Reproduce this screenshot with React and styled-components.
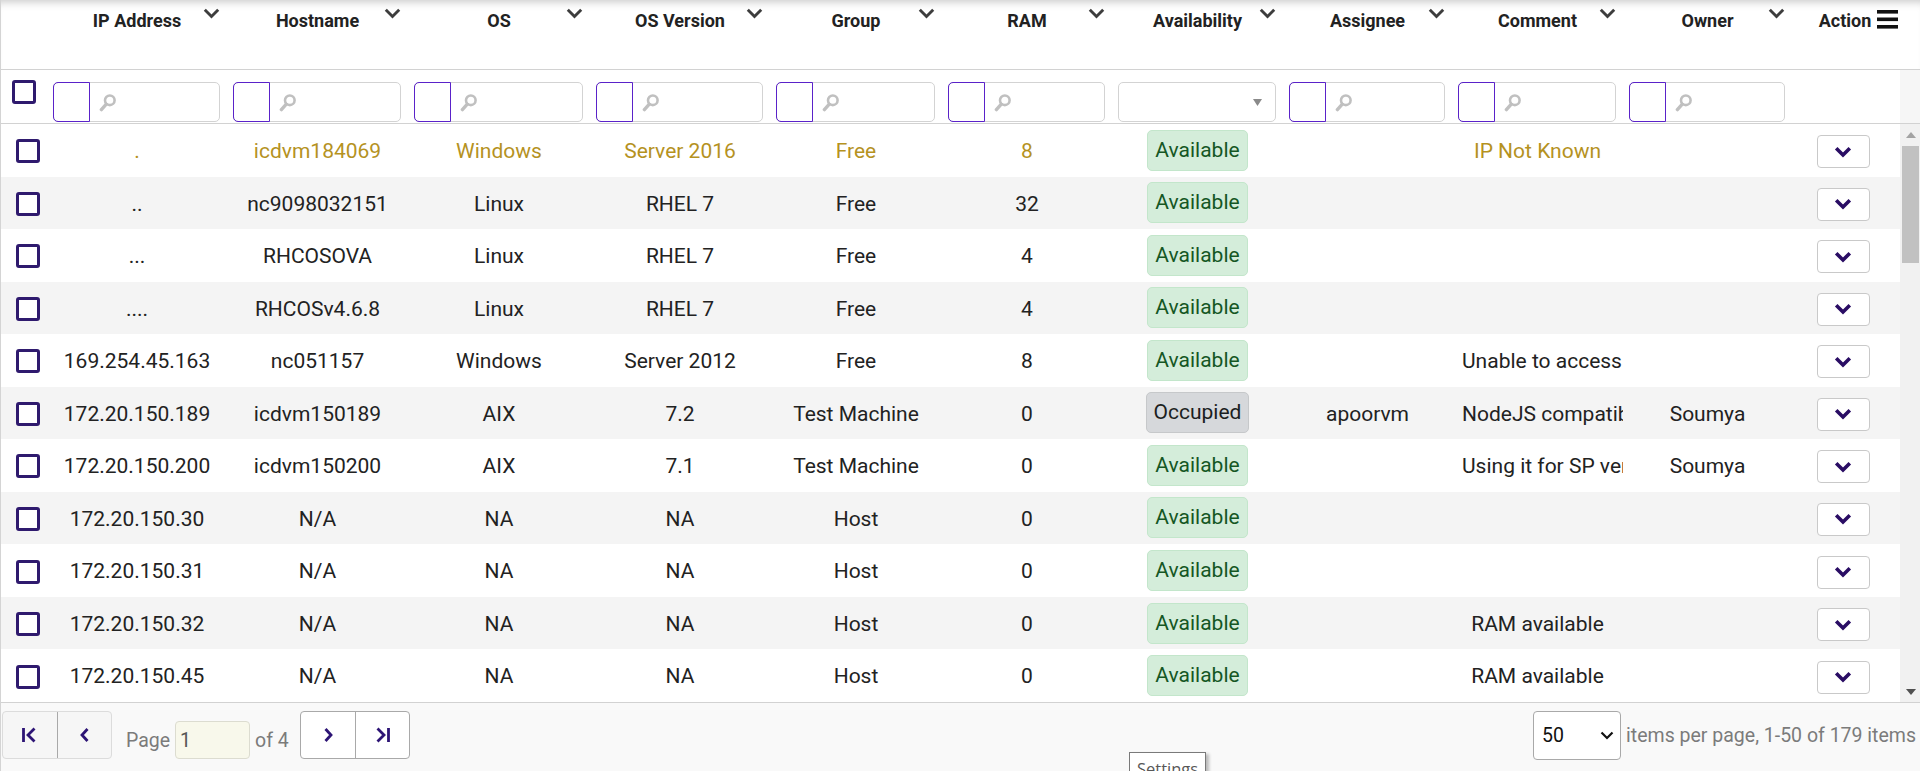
import React from 'react';
import styled, { createGlobalStyle } from 'styled-components';

const GlobalStyle = createGlobalStyle`
  * { box-sizing: border-box; }
  html, body { margin: 0; padding: 0; background: #fff; }
  body {
    font-family: Roboto, "Liberation Sans", Arial, sans-serif;
    overflow: hidden;
    color: #222;
  }
`;

const WIDTHS = [46, 180, 181, 182, 180, 172, 170, 171, 169, 171, 169, 108];
const COLS = WIDTHS.map((w) => `${w}px`).join(' ');
const ROW_H = 'calc(578px / 11)';

const Page = styled.div`
  width: 1920px;
  height: 771px;
  border-left: 1px solid #d4d4d4;
  display: flex;
  flex-direction: column;
  position: relative;
  overflow: hidden;
  background: #fff;
`;

const HeaderRow = styled.div`
  flex: none;
  display: grid;
  grid-template-columns: ${COLS} 1fr;
  height: 70px;
  border-bottom: 1px solid #d2d2d2;
  box-shadow: inset 0 9px 8px -7px rgba(0, 0, 0, 0.22);
`;

const HeaderCell = styled.div`
  display: grid;
  grid-template-columns: 1fr auto 1fr;
  align-items: start;
  padding: 9px ${(p) => p.$pr ?? 7}px 0 ${(p) => p.$pl ?? 7}px;
  font-size: 18px;
  font-weight: 700;
  line-height: 24px;
  color: #222;
`;

const HeaderLabel = styled.span`
  grid-column: 2;
  white-space: nowrap;
`;

const HeaderIcon = styled.span`
  grid-column: 3;
  justify-self: end;
  display: flex;
  margin-top: ${(p) => p.$mt ?? -1}px;
`;

const FilterRow = styled.div`
  flex: none;
  display: grid;
  grid-template-columns: ${COLS} 1fr;
  height: 54px;
  border-bottom: 1px solid #d2d2d2;
`;

const FilterCell = styled.div`
  display: flex;
  align-items: flex-end;
  padding: 12px 7px 1px 6px;
`;

const HeaderCheckCell = styled.div`
  display: flex;
  align-items: flex-start;
  padding: 10px 0 0 11px;
`;

const ScrollGutter = styled.div`
  background: #f6f6f6;
`;

const FilterBox = styled.div`
  flex: 1;
  height: 40px;
  display: flex;
  align-items: center;
  justify-content: ${(p) => (p.$select ? 'flex-end' : 'flex-start')};
  padding-right: ${(p) => (p.$select ? '13px' : '0')};
  border: 1px solid #d3d3d3;
  border-radius: 5px;
  background: #fff;
`;

const OperatorBox = styled.div`
  width: 37px;
  align-self: stretch;
  margin: -1px 0 -1px -1px;
  border: 1px solid #5a22c9;
  border-radius: 5px 0 0 5px;
`;

const SearchIcon = styled.svg`
  margin-left: 9px;
  margin-top: 2px;
`;

const Body = styled.div`
  flex: none;
  height: 578px;
  display: flex;
`;

const Rows = styled.div`
  flex: 1;
  overflow: hidden;
`;

const ScrollTrack = styled.div`
  flex: none;
  width: 20px;
  display: flex;
  flex-direction: column;
  background: #f1f1f1;
`;

const ScrollButton = styled.div`
  flex: none;
  height: 21px;
  display: flex;
  align-items: center;
  justify-content: center;
  padding-left: 2px;
`;

const ScrollThumb = styled.div`
  flex: none;
  height: 117px;
  margin: 1px 1px 0 2px;
  background: #c1c1c1;
`;

const ScrollSpace = styled.div`
  flex: 1;
`;

const Row = styled.div`
  display: grid;
  grid-template-columns: ${COLS};
  height: ${ROW_H};
  background: ${(p) => (p.$alt ? '#f4f4f4' : '#fff')};
  color: ${(p) => (p.$hl ? '#b5921f' : '#222')};
`;

const Cell = styled.div`
  padding: 1px 10px 0;
  text-align: center;
  white-space: nowrap;
  overflow: hidden;
  font-size: 21px;
  line-height: ${ROW_H};
`;

const CheckCell = styled.div`
  display: flex;
  align-items: center;
  padding: 2px 0 0 15px;
`;

const Checkbox = styled.div`
  width: 24px;
  height: 24px;
  border: 3px solid #2f1a6e;
  border-radius: 3px;
  background: #fff;
`;

const CenterCell = styled.div`
  display: flex;
  align-items: center;
  justify-content: center;
  padding-top: ${(p) => p.$pt ?? 0}px;
`;

const Badge = styled.span`
  padding: 6px 7px;
  font-size: 21px;
  line-height: 27px;
  border-radius: 5px;
  border: 1px solid ${(p) => (p.$busy ? '#c6c8ca' : '#c3e6cb')};
  background: ${(p) => (p.$busy ? '#d6d8db' : '#d4edda')};
  color: ${(p) => (p.$busy ? '#1b1e21' : '#155724')};
`;

const ActionButton = styled.div`
  width: 53px;
  height: 33px;
  margin-right: 6px;
  display: flex;
  align-items: center;
  justify-content: center;
  background: #fff;
  border: 1px solid #c9c9c9;
  border-radius: 4px;
`;

const Footer = styled.div`
  flex: 1;
  border-top: 1px solid #d2d2d2;
  background: #f9f9f9;
  display: flex;
  justify-content: space-between;
  align-items: flex-start;
  padding: 8px 4px 0 1px;
  font-size: 19.5px;
  color: #7b7b7b;
`;

const Pager = styled.div`
  display: flex;
  align-items: flex-end;
`;

const ButtonGroup = styled.div`
  display: flex;
  height: 48px;
  border: 1px solid ${(p) => (p.$strong ? '#a9a9a9' : '#dcdcdc')};
  border-radius: 4px;
  background: ${(p) => (p.$strong ? '#fff' : '#f6f6f6')};
  overflow: hidden;
`;

const PagerButton = styled.div`
  width: 54px;
  display: flex;
  align-items: center;
  justify-content: center;
  & + & {
    border-left: 1px solid ${(p) => (p.$strong ? '#a9a9a9' : '#dcdcdc')};
  }
`;

const PageInfo = styled.div`
  display: flex;
  align-items: center;
  gap: 5px;
  height: 38px;
  margin: 0 11px 0 14px;
`;

const PageInput = styled.div`
  width: 75px;
  height: 38px;
  display: flex;
  align-items: center;
  padding-left: 4px;
  background: #f8f8eb;
  border: 1px solid #dcdcd0;
  border-radius: 4px;
  color: #555;
`;

const SizeArea = styled.div`
  display: flex;
  align-items: center;
  gap: 5px;
  height: 49px;
`;

const SizeSelect = styled.div`
  width: 88px;
  height: 49px;
  margin-left: -2px;
  display: flex;
  align-items: center;
  justify-content: space-between;
  padding: 0 6px 0 8px;
  background: #fff;
  border: 1px solid #a9a9a9;
  border-radius: 4px;
  color: #111;
`;

const Tooltip = styled.div`
  position: absolute;
  left: 1128px;
  top: 752px;
  padding: 4px 7px;
  background: #fff;
  border: 1px solid #7a7a7a;
  box-shadow: 3px 2px 3px rgba(0, 0, 0, 0.25);
  font-family: "Open Sans", "DejaVu Sans", sans-serif;
  font-size: 16.5px;
  color: #575757;
  white-space: nowrap;
`;

const Chevron = () => (
  <svg width="17" height="11" viewBox="0 0 17 11">
    <polyline points="1.8,1.8 8.5,8.5 15.2,1.8" fill="none" stroke="#3d3d3d" strokeWidth="2.9" />
  </svg>
);

const Hamburger = () => (
  <svg width="21" height="20" viewBox="0 0 21 20">
    <rect x="0" y="0" width="21" height="3.6" fill="#111" />
    <rect x="0" y="7.5" width="21" height="3.6" fill="#111" />
    <rect x="0" y="15" width="21" height="3.6" fill="#111" />
  </svg>
);

const Magnifier = () => (
  <SearchIcon width="17" height="18" viewBox="0 0 17 18">
    <circle cx="10.8" cy="6.3" r="4.8" fill="none" stroke="#c0c0c0" strokeWidth="2.6" />
    <line x1="7.3" y1="10.2" x2="2.4" y2="15.6" stroke="#c0c0c0" strokeWidth="3.4" strokeLinecap="round" />
  </SearchIcon>
);

const DownTriangle = () => (
  <svg width="9" height="7" viewBox="0 0 9 7">
    <polygon points="0,0 9,0 4.5,7" fill="#8a8a8a" />
  </svg>
);

const ScrollUp = () => (
  <svg width="10" height="6" viewBox="0 0 10 6">
    <polygon points="0,6 10,6 5,0" fill="#a3a3a3" />
  </svg>
);

const ScrollDown = () => (
  <svg width="10" height="6" viewBox="0 0 10 6">
    <polygon points="0,0 10,0 5,6" fill="#505050" />
  </svg>
);

const ActionChevron = () => (
  <svg width="18" height="12" viewBox="0 0 18 12">
    <polyline points="2.2,2.2 9,9 15.8,2.2" fill="none" stroke="#2a0d64" strokeWidth="3.6" />
  </svg>
);

const PAGER_COLOR = '#2d1475';

const IconFirst = () => (
  <svg width="18" height="18" viewBox="0 0 18 18">
    <line x1="2.5" y1="2" x2="2.5" y2="16" stroke={PAGER_COLOR} strokeWidth="2.8" />
    <polyline points="13.5,2.5 7,9 13.5,15.5" fill="none" stroke={PAGER_COLOR} strokeWidth="2.8" />
  </svg>
);

const IconPrev = () => (
  <svg width="16" height="18" viewBox="0 0 16 18">
    <polyline points="10.5,3 5,9 10.5,15" fill="none" stroke={PAGER_COLOR} strokeWidth="2.8" />
  </svg>
);

const IconNext = () => (
  <svg width="16" height="18" viewBox="0 0 16 18">
    <polyline points="5.5,3 11,9 5.5,15" fill="none" stroke={PAGER_COLOR} strokeWidth="2.8" />
  </svg>
);

const IconLast = () => (
  <svg width="18" height="18" viewBox="0 0 18 18">
    <polyline points="4.5,2.5 11,9 4.5,15.5" fill="none" stroke={PAGER_COLOR} strokeWidth="2.8" />
    <line x1="15.5" y1="2" x2="15.5" y2="16" stroke={PAGER_COLOR} strokeWidth="2.8" />
  </svg>
);

const SelectChevron = () => (
  <svg width="14" height="9" viewBox="0 0 14 9">
    <polyline points="1.5,1.5 7,7 12.5,1.5" fill="none" stroke="#111" strokeWidth="2.2" />
  </svg>
);

const HEADERS = [
  'IP Address',
  'Hostname',
  'OS',
  'OS Version',
  'Group',
  'RAM',
  'Availability',
  'Assignee',
  'Comment',
  'Owner',
];

const BASE_ROWS = [
  ['.', 'icdvm184069', 'Windows', 'Server 2016', 'Free', '8', 'Available', '', 'IP Not Known', ''],
  ['..', 'nc9098032151', 'Linux', 'RHEL 7', 'Free', '32', 'Available', '', '', ''],
  ['...', 'RHCOSOVA', 'Linux', 'RHEL 7', 'Free', '4', 'Available', '', '', ''],
  ['....', 'RHCOSv4.6.8', 'Linux', 'RHEL 7', 'Free', '4', 'Available', '', '', ''],
  ['169.254.45.163', 'nc051157', 'Windows', 'Server 2012', 'Free', '8', 'Available', '', 'Unable to access', ''],
  ['172.20.150.189', 'icdvm150189', 'AIX', '7.2', 'Test Machine', '0', 'Occupied', 'apoorvm', 'NodeJS compatibility', 'Soumya'],
  ['172.20.150.200', 'icdvm150200', 'AIX', '7.1', 'Test Machine', '0', 'Available', '', 'Using it for SP verification', 'Soumya'],
  ['172.20.150.30', 'N/A', 'NA', 'NA', 'Host', '0', 'Available', '', '', ''],
  ['172.20.150.31', 'N/A', 'NA', 'NA', 'Host', '0', 'Available', '', '', ''],
  ['172.20.150.32', 'N/A', 'NA', 'NA', 'Host', '0', 'Available', '', 'RAM available', ''],
  ['172.20.150.45', 'N/A', 'NA', 'NA', 'Host', '0', 'Available', '', 'RAM available', ''],
];

const EXTRA_ROWS = Array.from({ length: 39 }, (_, i) => [
  `172.20.150.${46 + i}`,
  i % 3 === 0 ? 'N/A' : `icdvm150${String(46 + i).padStart(3, '0')}`,
  i % 3 === 0 ? 'NA' : 'Linux',
  i % 3 === 0 ? 'NA' : 'RHEL 7',
  i % 3 === 0 ? 'Host' : 'Free',
  i % 3 === 0 ? '0' : '16',
  'Available',
  '',
  '',
  '',
]);

const ROWS = [...BASE_ROWS, ...EXTRA_ROWS];

export default function App() {
  return (
    <>
      <GlobalStyle />
      <Page>
        <HeaderRow>
          <div />
          {HEADERS.map((h) => (
            <HeaderCell key={h}>
              <HeaderLabel>{h}</HeaderLabel>
              <HeaderIcon>
                <Chevron />
              </HeaderIcon>
            </HeaderCell>
          ))}
          <HeaderCell $pl={0} $pr={2}>
            <HeaderLabel>Action</HeaderLabel>
            <HeaderIcon $mt={1}>
              <Hamburger />
            </HeaderIcon>
          </HeaderCell>
          <div />
        </HeaderRow>

        <FilterRow>
          <HeaderCheckCell>
            <Checkbox />
          </HeaderCheckCell>
          {HEADERS.map((h) =>
            h === 'Availability' ? (
              <FilterCell key={h}>
                <FilterBox $select>
                  <DownTriangle />
                </FilterBox>
              </FilterCell>
            ) : (
              <FilterCell key={h}>
                <FilterBox>
                  <OperatorBox />
                  <Magnifier />
                </FilterBox>
              </FilterCell>
            )
          )}
          <div />
          <ScrollGutter />
        </FilterRow>

        <Body>
          <Rows>
            {ROWS.map((r, i) => (
              <Row key={i} $alt={i % 2 === 1} $hl={i === 0}>
                <CheckCell>
                  <Checkbox />
                </CheckCell>
                {r.map((v, j) =>
                  j === 6 ? (
                    <CenterCell key={j}>
                      <Badge $busy={v === 'Occupied'}>{v}</Badge>
                    </CenterCell>
                  ) : (
                    <Cell key={j}>{v}</Cell>
                  )
                )}
                <CenterCell $pt={3}>
                  <ActionButton>
                    <ActionChevron />
                  </ActionButton>
                </CenterCell>
              </Row>
            ))}
          </Rows>
          <ScrollTrack>
            <ScrollButton>
              <ScrollUp />
            </ScrollButton>
            <ScrollThumb />
            <ScrollSpace />
            <ScrollButton>
              <ScrollDown />
            </ScrollButton>
          </ScrollTrack>
        </Body>

        <Footer>
          <Pager>
            <ButtonGroup>
              <PagerButton>
                <IconFirst />
              </PagerButton>
              <PagerButton>
                <IconPrev />
              </PagerButton>
            </ButtonGroup>
            <PageInfo>
              <span>Page</span>
              <PageInput>1</PageInput>
              <span>of 4</span>
            </PageInfo>
            <ButtonGroup $strong>
              <PagerButton $strong>
                <IconNext />
              </PagerButton>
              <PagerButton $strong>
                <IconLast />
              </PagerButton>
            </ButtonGroup>
          </Pager>
          <SizeArea>
            <SizeSelect>
              <span>50</span>
              <SelectChevron />
            </SizeSelect>
            <span>items per page, 1-50 of 179 items</span>
          </SizeArea>
        </Footer>

        <Tooltip>Settings</Tooltip>
      </Page>
    </>
  );
}
